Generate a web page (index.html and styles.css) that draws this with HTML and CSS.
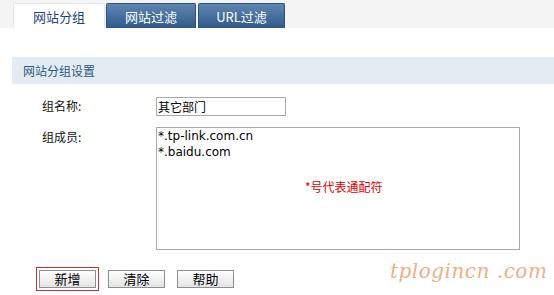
FILE: index.html
```html
<!DOCTYPE html>
<html>
<head>
    <meta charset="UTF-8">
    <title>网站分组</title>
    <link rel="stylesheet" href="styles.css">
</head>
<body>
    <div class="page">
        <div class="tab-bar">
            <button class="tab-link active">网站分组</button>
            <button class="tab-link">网站过滤</button>
            <button class="tab-link">URL过滤</button>
        </div>

        <div class="section-title">网站分组设置</div>

        <div class="form">
            <div class="form-row">
                <label for="group-name">组名称:</label>
                <input type="text" id="group-name" class="text-input" value="其它部门">
            </div>
            <div class="form-row members-row">
                <label>组成员:</label>
                <div class="member-box">
                    <div class="member-list">*.tp-link.com.cn<br>*.baidu.com</div>
                    <span class="wildcard-note">*号代表通配符</span>
                </div>
            </div>
        </div>

        <div class="button-row">
            <span class="focus-ring"><button class="btn">新增</button></span>
            <button class="btn">清除</button>
            <button class="btn">帮助</button>
            <span class="watermark">tplogincn .com</span>
        </div>
    </div>
</body>
</html>
```

FILE: styles.css
```css
:root {
    --tab-blue-top: #5f86b0;
    --tab-blue-bottom: #30598a;
    --title-bg: #e4ecf3;
    --title-text: #2c5784;
    --text-color: #111;
    --box-border: #a9a9a9;
}
body {
    margin: 0;
    background: #fff;
    color: var(--text-color);
    font-family: "Noto Sans CJK SC", "DejaVu Sans", sans-serif;
    font-size: 12px;
    overflow: hidden;
}
.page { width: 554px; height: 295px; position: relative; }

.tab-bar {
    display: flex; align-items: flex-end; gap: 1px;
    height: 28px; padding-left: 13px; background: #f4f4f4;
    box-sizing: border-box;
}
.tab-link {
    height: 25px; padding: 0; border: 1px solid #2c5482; border-bottom: none;
    background: linear-gradient(var(--tab-blue-top), var(--tab-blue-bottom));
    color: #fff; font-family: inherit; font-size: 13px; line-height: 23px;
    border-radius: 2px 2px 0 0; cursor: pointer; width: 90px;
}
.tab-link:nth-child(3) { width: 87px; margin-left: 1px; }
.tab-link.active {
    width: 92px; background: #fff; color: #1d4675; border-color: #e6e6e6;
}

.section-title {
    margin: 29px 0 0 12px; height: 27px; line-height: 27px;
    padding-left: 11px; background: var(--title-bg);
    color: var(--title-text); font-size: 12px;
}

.form { padding-left: 42px; margin-top: 13px; }
.form-row { display: flex; align-items: flex-start; }
.form-row label { width: 114px; line-height: 18px; }
.text-input {
    width: 130px; height: 19px; box-sizing: border-box; margin: 0;
    border: 1px solid var(--box-border); padding: 0 1px;
    font-family: inherit; font-size: 12px; color: #000;
}
.members-row { margin-top: 11px; }
.members-row label { padding-top: 1px; }
.member-box {
    position: relative; width: 364px; height: 123px; box-sizing: border-box;
    border: 1px solid var(--box-border);
}
.member-list {
    padding: 1px 0 0 1px; font-family: "DejaVu Sans", sans-serif;
    font-size: 12px; line-height: 15.5px; color: #000;
}
.wildcard-note {
    position: absolute; left: 148px; top: 50px;
    color: #e00000; font-size: 12px;
}

.button-row {
    display: flex; align-items: center; gap: 9px;
    margin: 17px 0 0 36px; position: relative;
}
.focus-ring { border: 1px solid #c4323a; padding: 2px; display: flex; }
.btn {
    width: 57px; height: 18px; padding: 0; margin: 0;
    border: 1px solid #8e8e8e; background: linear-gradient(#ffffff, #e3e3e3);
    font-family: inherit; font-size: 13px; line-height: 16px; color: #000;
}
.button-row > .btn:nth-of-type(2) { margin-left: 3px; }
.watermark {
    position: absolute; left: 354px; top: -8px;
    font-family: "DejaVu Serif", serif; font-style: italic;
    font-size: 20px; color: #eaa373; opacity: 0.85; letter-spacing: 0.5px;
}
```
